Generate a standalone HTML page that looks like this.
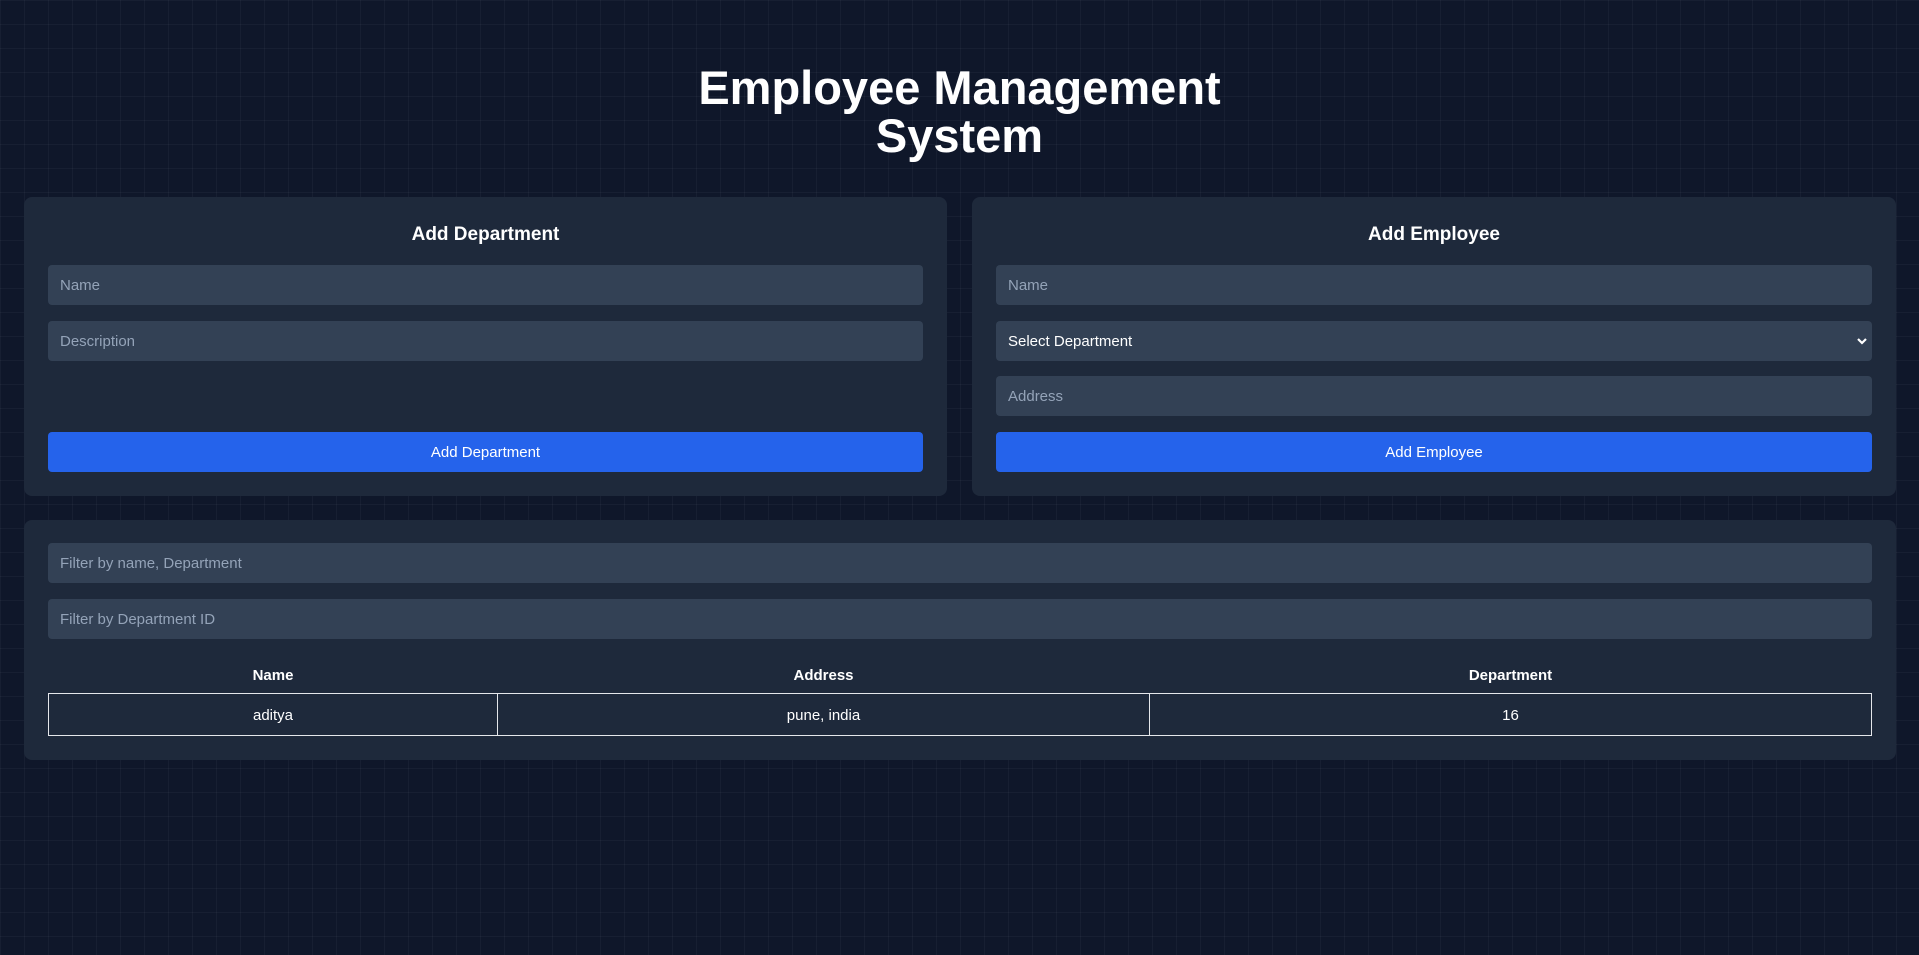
<!DOCTYPE html>
<html><head><meta charset="utf-8"><style>
*{box-sizing:border-box;margin:0;padding:0}
html,body{width:1919px;height:955px;overflow:hidden}
body{background-color:#0f172a;background-image:linear-gradient(rgba(255,255,255,0.035) 1px,transparent 1px),linear-gradient(90deg,rgba(255,255,255,0.035) 1px,transparent 1px);background-size:24px 24px;background-position:0 0;font-family:"Segoe UI","Liberation Sans",sans-serif;color:#fff;position:relative}
h1{position:absolute;left:0;width:1919px;top:64px;text-align:center;font-size:47px;line-height:48px;font-weight:bold}
.card{position:absolute;background:#1e293b;border-radius:8px}
.h{position:absolute;left:0;right:0;text-align:center;font-size:19px;font-weight:bold}
.in{position:absolute;left:24px;right:24px;height:40px;background:#334155;border-radius:4px;color:#94a3b8;font-size:15px;line-height:42px;padding-left:12px}
.btn{position:absolute;left:24px;right:24px;height:40px;background:#2563eb;border-radius:4px;font-size:15px;line-height:42px;text-align:center;color:#fff}
.sel{color:#fff}
.sel svg{position:absolute;right:4px;top:15px}
table{position:absolute;left:24px;width:1824px;border-collapse:collapse;font-size:15px}
th{height:36px;font-weight:bold;padding-top:2px}
td{border:1px solid #e5e7eb;height:42px;text-align:center;padding-top:2px}
</style></head><body>
<h1>Employee Management<br>System</h1>
<div class="card" style="left:24px;top:197px;width:923px;height:299px">
<div class="h" style="top:27px">Add Department</div>
<div class="in" style="top:68px">Name</div>
<div class="in" style="top:124px">Description</div>
<div class="btn" style="top:235px">Add Department</div>
</div>
<div class="card" style="left:972px;top:197px;width:924px;height:299px">
<div class="h" style="top:27px">Add Employee</div>
<div class="in" style="top:68px">Name</div>
<div class="in sel" style="top:124px">Select Department<svg width="12" height="10" viewBox="0 0 12 10"><path d="M2 3l4 4 4-4" stroke="#fff" stroke-width="2.2" fill="none"/></svg></div>
<div class="in" style="top:179px">Address</div>
<div class="btn" style="top:235px">Add Employee</div>
</div>
<div class="card" style="left:24px;top:520px;width:1872px;height:240px">
<div class="in" style="top:23px">Filter by name, Department</div>
<div class="in" style="top:79px">Filter by Department ID</div>
<table style="top:137px">
<tr><th style="width:449px">Name</th><th style="width:652px">Address</th><th>Department</th></tr>
<tr><td>aditya</td><td>pune, india</td><td>16</td></tr>
</table>
</div>
</body></html>
